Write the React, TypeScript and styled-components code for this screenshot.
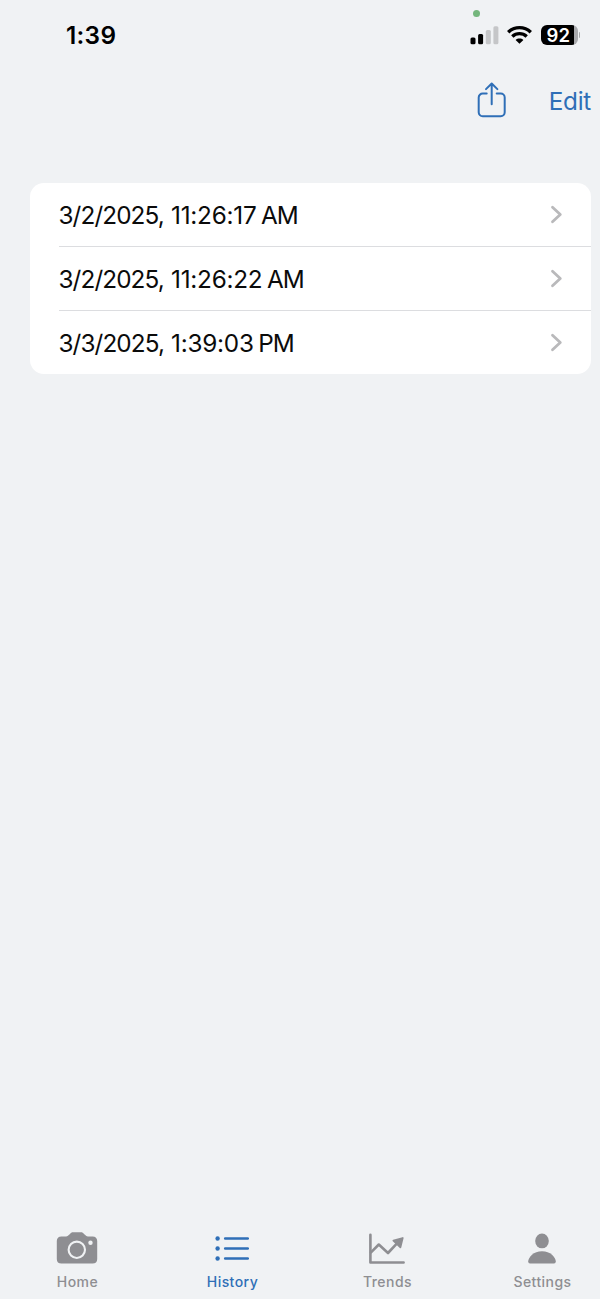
import React from "react";
import styled, { createGlobalStyle } from "styled-components";

const BLUE = "#2f6fb7";
const GRAY = "#8e8e92";
const SURFACE = "#f0f2f4";

const GlobalStyle = createGlobalStyle`
  *, *::before, *::after { box-sizing: border-box; }
  body { margin: 0; background: ${SURFACE}; }
`;

const Screen = styled.div`
  display: flex;
  flex-direction: column;
  width: 600px;
  height: 1299px;
  overflow: hidden;
  background: ${SURFACE};
  color: #0b0b0b;
  font-family: Inter, "Liberation Sans", sans-serif;
`;

const StatusBar = styled.header`
  position: relative;
  display: flex;
  align-items: center;
  justify-content: space-between;
  height: 60px;
  padding: 10px 20px 0 66px;
`;

const CameraDot = styled.span`
  position: absolute;
  left: 472.5px;
  top: 9.5px;
  width: 7.5px;
  height: 7.5px;
  border-radius: 50%;
  background: #74b67c;
`;

const Clock = styled.time`
  font-size: 24.3px;
  font-weight: 600;
  line-height: 30px;
  letter-spacing: 0.3px;
  color: #000;
`;

const StatusIcons = styled.div`
  display: flex;
  align-items: center;
  gap: 8.5px;
`;

const Battery = styled.div`
  display: flex;
  align-items: center;
  gap: 1px;
`;

const BatteryBody = styled.div`
  width: 37px;
  height: 20px;
  border-radius: 6px;
  background: linear-gradient(to right, #000 33.5px, #a9aaad 33.5px);
  color: #fff;
  font-size: 18.5px;
  font-weight: 600;
  line-height: 20px;
  text-align: center;
  padding-right: 1.5px;
`;

const BatteryTip = styled.span`
  width: 1.5px;
  height: 6px;
  border-radius: 0 2px 2px 0;
  background: #a9aaad;
`;

const Toolbar = styled.nav`
  display: flex;
  align-items: center;
  justify-content: flex-end;
  gap: 42px;
  height: 81px;
  padding-right: 9px;
  color: ${BLUE};
`;

const ToolButton = styled.button`
  display: flex;
  padding: 0;
  border: 0;
  background: none;
  color: inherit;
  font: 400 24.3px/30px Inter, sans-serif;
  letter-spacing: -0.25px;
`;

const Card = styled.ul`
  list-style: none;
  width: 561.5px;
  height: 191px;
  margin: 42px 0 0 29.5px;
  padding: 0 0 0 29px;
  border-radius: 14px;
  background: #fff;
`;

const Row = styled.li`
  display: flex;
  align-items: center;
  justify-content: space-between;
  height: 63.8px;
  padding: 1px 28px 0 0;
  font-size: 24.3px;
  border-bottom: 1px solid #dcdde0;
  &:last-child { border-bottom: 0; }
`;

const Stamp = styled.span`
  display: flex;
  align-items: baseline;
  line-height: 30px;
  white-space: pre;
`;

const DatePart = styled.span`
  width: 112.6px;
  letter-spacing: -0.9px;
`;

const TimePart = styled.span`
  letter-spacing: -0.25px;
`;

const Period = styled.span`
  margin-left: 4.5px;
  letter-spacing: -0.8px;
`;

const TabBar = styled.nav`
  display: flex;
  width: 620px;
  height: 78px;
  margin: auto 0 0 -0.5px;
`;

const Tab = styled.a<{ $active?: boolean }>`
  display: flex;
  flex-direction: column;
  align-items: center;
  width: 155px;
  padding-top: 8px;
  color: ${(p) => (p.$active ? BLUE : GRAY)};
`;

const TabLabel = styled.span`
  margin-top: 4px;
  padding-left: 1px;
  font-size: 14px;
  font-weight: 500;
  line-height: 18px;
  letter-spacing: 0.45px;
`;

const SignalIcon = () => (
  <svg width="29" height="20" viewBox="0 0 29 20">
    <rect x="0.5" y="12.5" width="5" height="6.7" rx="1.5" fill="#000" />
    <rect x="8.1" y="9" width="5" height="10.2" rx="1.5" fill="#000" />
    <rect x="15.8" y="5" width="5" height="14.2" rx="1.5" fill="#c5c6c8" />
    <rect x="23.4" y="1.2" width="5" height="18" rx="1.5" fill="#c5c6c8" />
  </svg>
);

const WifiIcon = () => (
  <svg width="25" height="20" viewBox="0 0 25 20">
    <g fill="none" stroke="#000" strokeWidth="3.4">
      <path d="M1.2 7.2C7.6 1.1 17.4 1.1 23.8 7.2" />
      <path d="M5.3 11.5C9.4 7.7 15.6 7.7 19.7 11.5" />
    </g>
    <path d="M8.6 14.9C10.8 13 14.2 13 16.4 14.9L12.5 18.8Z" fill="#000" />
  </svg>
);

const ShareIcon = () => (
  <svg width="30" height="38" viewBox="0 0 30 38" fill="none" stroke="currentColor" strokeWidth="2" strokeLinecap="round" strokeLinejoin="round">
    <path d="M9.7 11.6H5.7A4 4 0 0 0 1.7 15.6V30.3A4 4 0 0 0 5.7 34.3H23.7A4 4 0 0 0 27.7 30.3V15.6A4 4 0 0 0 23.7 11.6H19.7" />
    <path d="M14.7 22.3V1.5M9 7.1L14.7 1.5L20.4 7.1" />
  </svg>
);

const Chevron = () => (
  <svg width="13" height="20" viewBox="0 0 13 20" fill="none" stroke="#b9b9bb" strokeWidth="2.8" strokeLinecap="round" strokeLinejoin="round">
    <path d="M2.5 2.2L10.3 9.5L2.5 16.8" />
  </svg>
);

const CameraIcon = () => (
  <svg width="42" height="40" viewBox="0 -0.5 42 40">
    <path d="M5.5 6.9H10.2C11.3 6.9 12 6.5 12.8 5.6L14 4.4C14.8 3.3 15.7 2.8 17 2.8H25C26.3 2.8 27.2 3.3 28 4.4L29.2 5.6C30 6.5 30.7 6.9 31.8 6.9H36.5C39.6 6.9 41.2 8.6 41.2 11.6V29.4C41.2 32.5 39.6 34 36.5 34H5.5C2.4 34 .8 32.5 .8 29.4V11.6C.8 8.6 2.4 6.9 5.5 6.9Z" fill="currentColor" />
    <circle cx="20.8" cy="20.3" r="8.2" fill="none" stroke={SURFACE} strokeWidth="2.1" />
    <circle cx="34.5" cy="13.3" r="2.2" fill={SURFACE} />
  </svg>
);

const ListIcon = () => (
  <svg width="34" height="40" viewBox="0 -0.7 34 40">
    {[8.8, 18.8, 28.8].map((y) => (
      <g key={y}>
        <circle cx="2.6" cy={y} r="2.2" fill="currentColor" />
        <path d={`M10.2 ${y}H32.8`} stroke="currentColor" strokeWidth="2.6" strokeLinecap="round" />
      </g>
    ))}
  </svg>
);

const TrendIcon = () => (
  <svg width="38" height="40" viewBox="0 -0.7 38 40" fill="none" stroke="currentColor" strokeWidth="2.6" strokeLinecap="round" strokeLinejoin="round">
    <path d="M2.4 5V32.8H35.6" />
    <path d="M3 22.7L10.8 14.8L20 23.3L29 13.7" />
    <path d="M25.4 11L34.7 8.3L32.4 17.6Z" fill="currentColor" strokeWidth="1.8" />
  </svg>
);

const PersonIcon = () => (
  <svg width="30" height="40" viewBox="0 -0.5 30 40" fill="currentColor">
    <ellipse cx="15" cy="11.4" rx="6.8" ry="7.4" />
    <path d="M3 34Q1.2 34 1.2 32.1C1.2 27.6 6.7 21.7 15 21.7S28.8 27.6 28.8 32.1Q28.8 34 27 34Z" />
  </svg>
);

const entries = [
  { date: "3/2/2025,", time: "11:26:17", period: "AM" },
  { date: "3/2/2025,", time: "11:26:22", period: "AM" },
  { date: "3/3/2025,", time: "1:39:03", period: "PM" },
];

const tabs = [
  { label: "Home", Icon: CameraIcon },
  { label: "History", Icon: ListIcon, active: true },
  { label: "Trends", Icon: TrendIcon },
  { label: "Settings", Icon: PersonIcon },
];

export default function App() {
  return (
    <Screen>
      <GlobalStyle />
      <StatusBar>
        <CameraDot />
        <Clock>1:39</Clock>
        <StatusIcons>
          <SignalIcon />
          <WifiIcon />
          <Battery>
            <BatteryBody>92</BatteryBody>
            <BatteryTip />
          </Battery>
        </StatusIcons>
      </StatusBar>
      <Toolbar>
        <ToolButton aria-label="Share"><ShareIcon /></ToolButton>
        <ToolButton>Edit</ToolButton>
      </Toolbar>
      <Card>
        {entries.map((e) => (
          <Row key={e.date + e.time}>
            <Stamp>
              <DatePart>{e.date} </DatePart>
              <TimePart>{e.time}</TimePart>
              <Period>{e.period}</Period>
            </Stamp>
            <Chevron />
          </Row>
        ))}
      </Card>
      <TabBar>
        {tabs.map(({ label, Icon, active }) => (
          <Tab key={label} $active={active}>
            <Icon />
            <TabLabel>{label}</TabLabel>
          </Tab>
        ))}
      </TabBar>
    </Screen>
  );
}
